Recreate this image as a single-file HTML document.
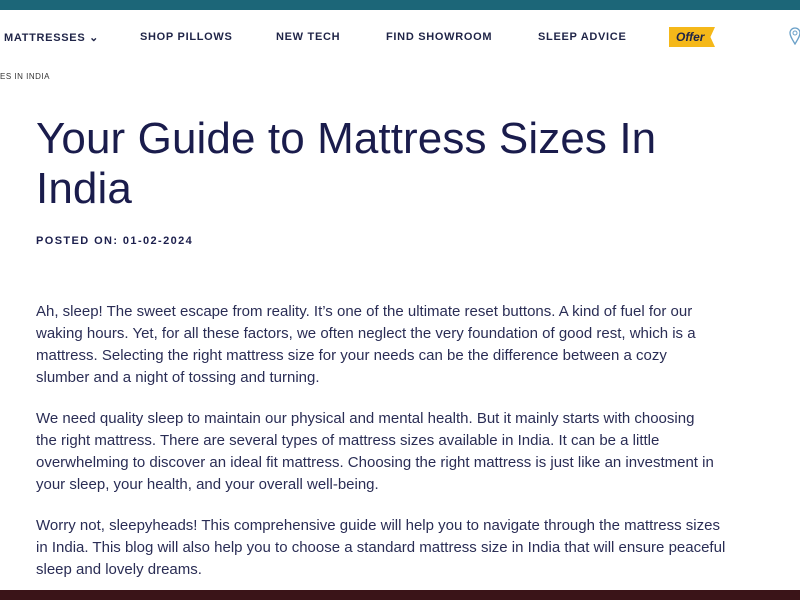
<!DOCTYPE html>
<html><head><style>
*{margin:0;padding:0;box-sizing:border-box}
body{width:800px;height:600px;overflow:hidden;background:#fff;font-family:"Liberation Sans",sans-serif;color:#1c1f4d;position:relative}
.top{position:absolute;left:0;top:0;width:800px;height:10px;background:#1c6678}
.nav{position:absolute;top:31px;font-size:11px;font-weight:bold;letter-spacing:.7px;color:#1f2447}
.offer{position:absolute;left:669px;top:27px;width:46px;height:20px;background:#f5b819;font-size:12px;font-weight:bold;font-style:italic;color:#1f2447;padding:3px 0 0 7px;clip-path:polygon(0 0,100% 0,90% 50%,100% 100%,0 100%)}
.bc{position:absolute;left:0;top:72px;font-size:8px;letter-spacing:.5px;color:#333}
h1{position:absolute;left:36px;top:114px;width:700px;font-weight:normal;font-size:44px;letter-spacing:.1px;line-height:50px;color:#1a1c4c}
.date{position:absolute;left:36px;top:235px;font-size:11px;font-weight:bold;letter-spacing:1.4px}
.p{position:absolute;left:36px;width:760px;white-space:nowrap;font-size:15px;line-height:22px;color:#2a2d55}
.bot{position:absolute;left:0;top:590px;width:800px;height:10px;background:#3a1418}
</style></head><body>
<div class="top"></div>
<div class="nav" style="left:4px">MATTRESSES &#8964;</div>
<div class="nav" style="left:140px">SHOP PILLOWS</div>
<div class="nav" style="left:276px">NEW TECH</div>
<div class="nav" style="left:386px">FIND SHOWROOM</div>
<div class="nav" style="left:538px">SLEEP ADVICE</div>
<div class="offer">Offer</div>
<svg style="position:absolute;left:789px;top:27px" width="12" height="18" viewBox="0 0 12 18"><path d="M6 17C3 12 1 9 1 6a5 5 0 0110 0c0 3-2 6-5 11z" fill="none" stroke="#6aa0c8" stroke-width="1.3"/><circle cx="6" cy="6" r="2" fill="none" stroke="#6aa0c8"/></svg>
<div class="bc">ES IN INDIA</div>
<h1>Your Guide to Mattress Sizes In India</h1>
<div class="date">POSTED ON: 01-02-2024</div>
<div class="p" style="top:301px">Ah, sleep! The sweet escape from reality. It’s one of the ultimate reset buttons. A kind of fuel for our<br>waking hours. Yet, for all these factors, we often neglect the very foundation of good rest, which is a<br>mattress. Selecting the right mattress size for your needs can be the difference between a cozy<br>slumber and a night of tossing and turning.</div>
<div class="p" style="top:408px">We need quality sleep to maintain our physical and mental health. But it mainly starts with choosing<br>the right mattress. There are several types of mattress sizes available in India. It can be a little<br>overwhelming to discover an ideal fit mattress. Choosing the right mattress is just like an investment in<br>your sleep, your health, and your overall well-being.</div>
<div class="p" style="top:515px">Worry not, sleepyheads! This comprehensive guide will help you to navigate through the mattress sizes<br>in India. This blog will also help you to choose a standard mattress size in India that will ensure peaceful<br>sleep and lovely dreams.</div>
<div class="bot"></div>
</body></html>
